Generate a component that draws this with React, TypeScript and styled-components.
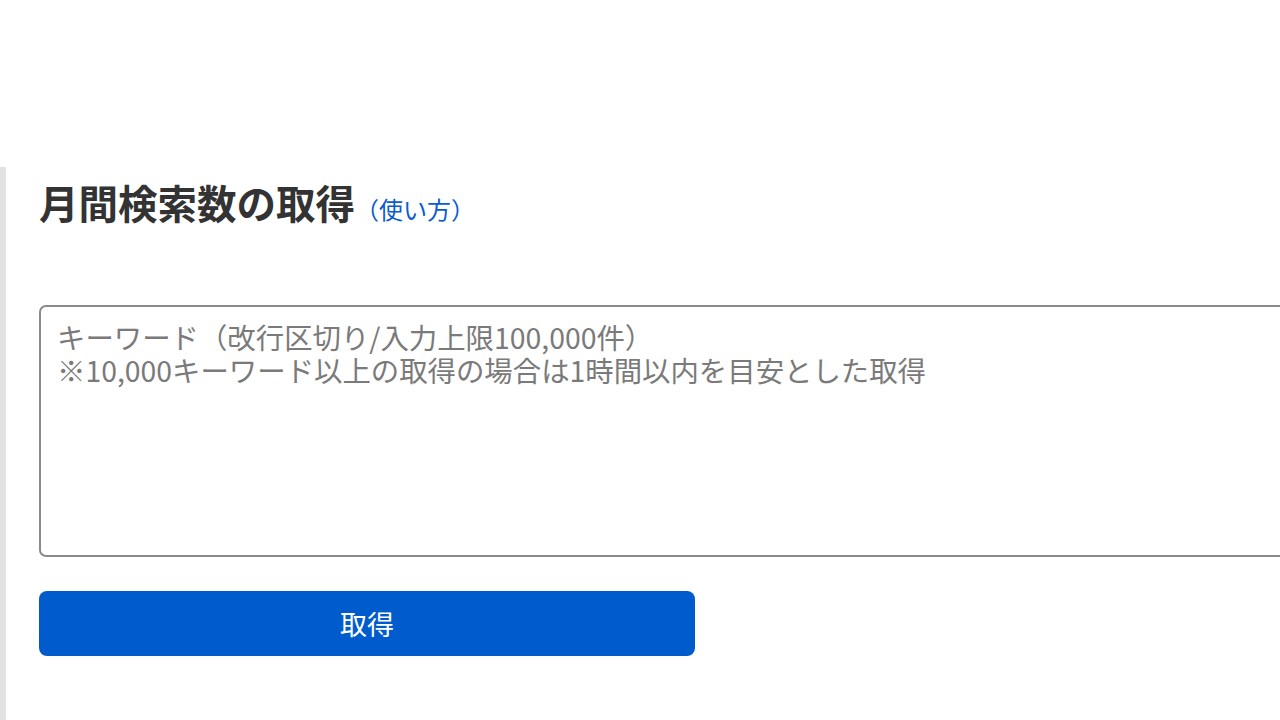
import React from "react";
import styled, { createGlobalStyle } from "styled-components";

const GlobalStyle = createGlobalStyle`
  html, body {
    margin: 0;
    padding: 0;
    background: #ffffff;
    overflow: hidden;
  }
  body {
    font-family: "Noto Sans CJK JP", "Noto Sans", sans-serif;
    color: #333333;
  }
`;

export default function App() {
  return (
    <>
      <GlobalStyle />
      <Page>
        <Section>
          <Heading>
            月間検索数の取得
            <HelpLink href="#">（使い方）</HelpLink>
          </Heading>

          <KeywordInput
            placeholder={
              "キーワード（改行区切り/入力上限100,000件）\n※10,000キーワード以上の取得の場合は1時間以内を目安とした取得"
            }
          />

          <SubmitButton type="button">取得</SubmitButton>
        </Section>
      </Page>
    </>
  );
}

const Page = styled.div`
  width: 1280px;
  height: 720px;
  padding-top: 167px;
  box-sizing: border-box;
`;

const Section = styled.main`
  height: 100%;
  border-left: 6px solid #e2e2e2;
  padding-left: 33px;
  box-sizing: border-box;
  display: flex;
  flex-direction: column;
  align-items: flex-start;
`;

const Heading = styled.h2`
  margin: 8px 0 0;
  height: 53px;
  font-size: 39.5px;
  line-height: 53px;
  font-weight: 700;
  color: #333333;
  display: flex;
  align-items: baseline;
`;

const HelpLink = styled.a`
  margin-left: 0;
  font-size: 24px;
  font-weight: 400;
  color: #0b5ccf;
  text-decoration: none;
`;

const KeywordInput = styled.textarea`
  margin-top: 77px;
  width: 1300px;
  height: 252px;
  box-sizing: border-box;
  border: 2px solid #8a8a8a;
  border-radius: 7px;
  padding: 13px 16px;
  font-family: "Noto Sans CJK JP", "Noto Sans", sans-serif;
  font-size: 28.4px;
  line-height: 33px;
  color: #333333;
  resize: none;
  outline: none;

  &::placeholder {
    color: #7a7a7a;
  }
`;

const SubmitButton = styled.button`
  margin-top: 34px;
  width: 656px;
  height: 65px;
  border: none;
  border-radius: 8px;
  background: #005ccc;
  color: #ffffff;
  font-family: "Noto Sans CJK JP", "Noto Sans", sans-serif;
  font-size: 27px;
  font-weight: 400;
  cursor: pointer;
`;
